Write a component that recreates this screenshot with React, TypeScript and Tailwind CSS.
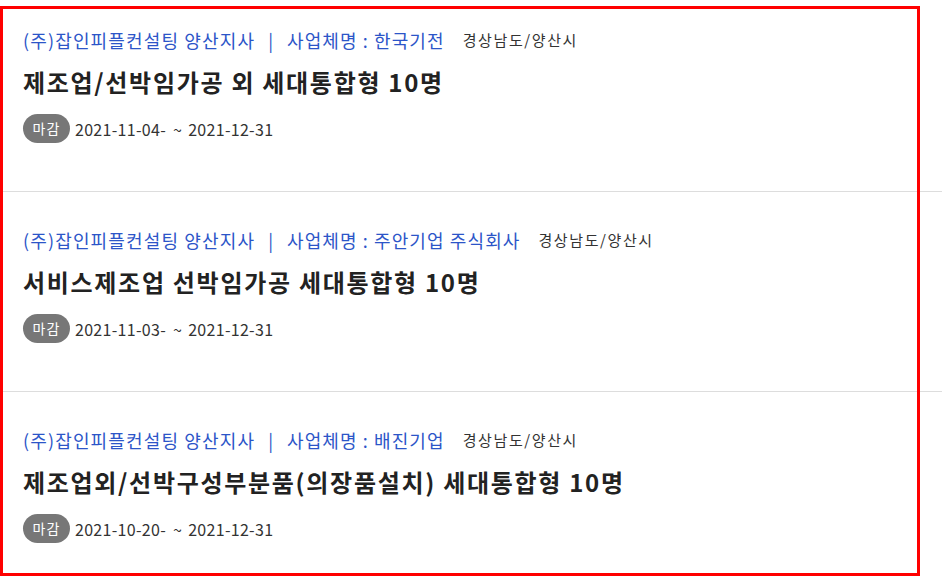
import React from "react";

const items = [
  {
    company: "(주)잡인피플컨설팅 양산지사",
    biz: "사업체명 : 한국기전",
    loc: "경상남도/양산시",
    title: "제조업/선박임가공 외 세대통합형 10명",
    start: "2021-11-04-",
    end: "2021-12-31",
  },
  {
    company: "(주)잡인피플컨설팅 양산지사",
    biz: "사업체명 : 주안기업 주식회사",
    loc: "경상남도/양산시",
    title: "서비스제조업 선박임가공 세대통합형 10명",
    start: "2021-11-03-",
    end: "2021-12-31",
  },
  {
    company: "(주)잡인피플컨설팅 양산지사",
    biz: "사업체명 : 배진기업",
    loc: "경상남도/양산시",
    title: "제조업외/선박구성부분품(의장품설치) 세대통합형 10명",
    start: "2021-10-20-",
    end: "2021-12-31",
  },
];

export default function App() {
  return (
    <div
      className="relative w-[942px] h-[576px] overflow-hidden bg-white"
      style={{ fontFamily: "'Noto Sans CJK KR', 'Noto Sans', sans-serif" }}
    >
      <ul className="flex flex-col">
        {items.map((it, i) => (
          <li
            key={i}
            className={`border-b border-[#dddddd] pl-[23px] pb-[48px] ${i === 0 ? "pt-[28px]" : "pt-[36px]"}`}
          >
            <div className="flex items-center h-[24px] whitespace-nowrap">
              <span className="text-[18px] tracking-[1.15px] text-[#2c55c8]">{it.company}</span>
              <span className="text-[18px] text-[#2c55c8] ml-[13px] mr-[14px]">|</span>
              <span className="text-[18px] tracking-[1.1px] text-[#2c55c8]">{it.biz}</span>
              <span className="text-[15px] tracking-[1.6px] text-[#333333] ml-[18px]">{it.loc}</span>
            </div>
            <div className="mt-[14px] h-[32px] flex items-center text-[24px] tracking-[1.7px] font-bold text-[#222222] whitespace-nowrap">
              {it.title}
            </div>
            <div className="mt-[16px] flex items-center h-[29px]">
              <span className="inline-flex items-center justify-center w-[47px] h-[29px] rounded-full bg-[#777777] text-white text-[14px] tracking-[1px]">
                마감
              </span>
              <span className="ml-[5px] flex items-center text-[16px] tracking-[0.3px] text-[#333333] whitespace-nowrap">
                <span>{it.start}</span>
                <span className="ml-[7px]">~</span>
                <span className="ml-[6px]">{it.end}</span>
              </span>
            </div>
          </li>
        ))}
      </ul>
      <div className="absolute left-0 top-[6px] w-[920px] h-[570px] border-[3px] border-[#ff0000] pointer-events-none" />
    </div>
  );
}
